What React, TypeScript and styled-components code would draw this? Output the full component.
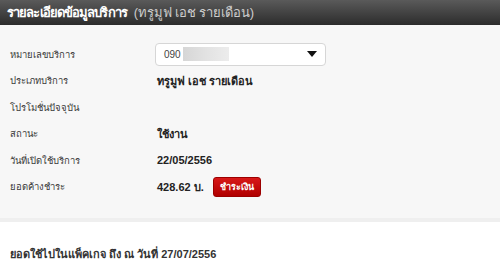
import styled, { createGlobalStyle } from "styled-components";

const GlobalStyle = createGlobalStyle`
  html, body {
    margin: 0;
    padding: 0;
    background: #ffffff;
  }
  body {
    width: 500px;
    height: 266px;
    overflow: hidden;
    font-family: Tahoma, "Liberation Sans", "Noto Sans", sans-serif;
  }
`;

type Info = { label: string; value?: string };

const rows: Info[] = [
  { label: "ประเภทบริการ", value: "ทรูมูฟ เอช รายเดือน" },
  { label: "โปรโมชั่นปัจจุบัน" },
  { label: "สถานะ", value: "ใช้งาน" },
  { label: "วันที่เปิดใช้บริการ", value: "22/05/2556" },
];

const App = () => {
  return (
    <>
      <GlobalStyle />
      <Page>
        <Header>
          <Title>รายละเอียดข้อมูลบริการ</Title>
          <SubTitle>(ทรูมูฟ เอช รายเดือน)</SubTitle>
        </Header>
        <Panel>
          <Row>
            <Label>หมายเลขบริการ</Label>
            <Select>
              <SelectNumber>090</SelectNumber>
              <Blur />
              <Arrow />
            </Select>
          </Row>
          {rows.map((row) => (
            <Row key={row.label}>
              <Label>{row.label}</Label>
              <Value>{row.value}</Value>
            </Row>
          ))}
          <Row>
            <Label>ยอดค้างชำระ</Label>
            <Value>
              428.62 บ.
              <PayButton type="button">ชำระเงิน</PayButton>
            </Value>
          </Row>
        </Panel>
        <Usage>ยอดใช้ไปในแพ็คเกจ ถึง ณ วันที่ 27/07/2556</Usage>
      </Page>
    </>
  );
};

const Page = styled.div`
  display: flex;
  flex-direction: column;
  width: 500px;
`;

const Header = styled.div`
  display: flex;
  flex-shrink: 0;
  align-items: center;
  gap: 7px;
  height: 25px;
  padding: 0 7px;
  background: linear-gradient(#5a5a5a, #2c2c2c);
  line-height: 1;
  white-space: nowrap;
`;

const Title = styled.span`
  color: #ffffff;
  font-size: 13px;
  font-weight: bold;
  letter-spacing: -0.9px;
`;

const SubTitle = styled.span`
  color: #cccccc;
  font-size: 13px;
  font-weight: normal;
  letter-spacing: -0.1px;
`;

const Panel = styled.div`
  display: flex;
  flex-direction: column;
  background: #f7f7f7;
  padding: 16px 0 18px 10px;
  border-bottom: 4px solid #efefef;
`;

const Row = styled.div`
  display: grid;
  grid-template-columns: 145px 1fr;
  align-items: center;
  min-height: 26.5px;
`;

const Label = styled.div`
  font-size: 9.5px;
  color: #3a3a3a;
`;

const Value = styled.div`
  display: flex;
  align-items: center;
  gap: 9px;
  padding-left: 2px;
  font-size: 11px;
  font-weight: bold;
  color: #222222;
`;

const Select = styled.div`
  display: flex;
  align-items: center;
  box-sizing: border-box;
  width: 171px;
  height: 23px;
  padding: 0 8px;
  background: #ffffff;
  border: 1px solid #d6d6d6;
  border-radius: 4px;
`;

const SelectNumber = styled.span`
  font-size: 10px;
  color: #444444;
`;

const Blur = styled.span`
  width: 46px;
  height: 14px;
  margin-left: 2px;
  background: linear-gradient(90deg, #d6d6d6, #e2e2e2 50%, #ececec);
`;

const Arrow = styled.span`
  margin-left: auto;
  width: 0;
  height: 0;
  border-left: 5px solid transparent;
  border-right: 5px solid transparent;
  border-top: 6px solid #111111;
`;

const PayButton = styled.button`
  height: 20px;
  padding: 0 6px;
  border: 1px solid #9c0000;
  border-radius: 3px;
  background: linear-gradient(#d81818, #b00000);
  color: #ffffff;
  font-family: inherit;
  font-size: 9px;
  font-weight: bold;
`;

const Usage = styled.div`
  padding: 23px 10px 0;
  font-size: 11px;
  font-weight: bold;
  color: #333333;
`;

export default App;
